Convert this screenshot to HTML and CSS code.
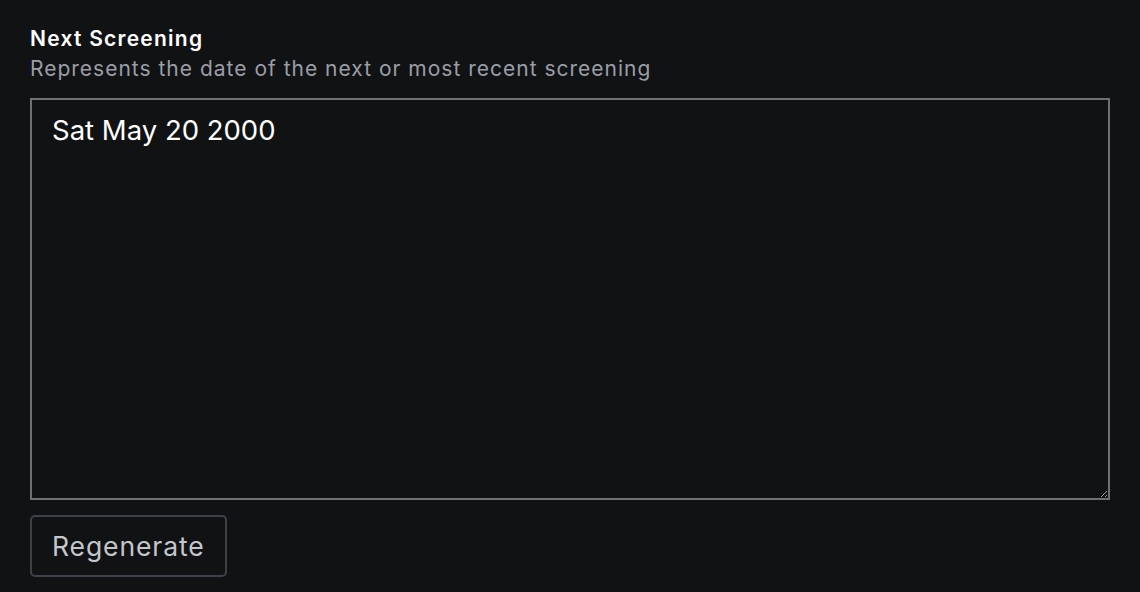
FILE: index.html
```html
<!DOCTYPE html>
<html lang="en">
<head>
<meta charset="utf-8">
<link rel="stylesheet" href="styles.css">
</head>
<body>
<div class="field">
  <label class="label" for="next">Next Screening</label>
  <div class="desc">Represents the date of the next or most recent screening</div>
  <textarea id="next" class="input">Sat May 20 2000</textarea>
  <div class="actions"><button class="btn">Regenerate</button></div>
</div>
</body>
</html>
```
FILE: styles.css
```css
html, body {
  margin: 0;
  background: #111214;
  color-scheme: dark;
}
body {
  font-family: Inter, "Noto Sans", sans-serif;
  padding: 25px 30px 0 30px;
}
.field {
  display: flex;
  flex-direction: column;
}
.label {
  font-size: 21px;
  font-weight: 600;
  letter-spacing: 1.25px;
  color: #ffffff;
  line-height: 28px;
}
.desc {
  font-size: 21px;
  letter-spacing: 1px;
  color: #9a9ea6;
  line-height: 32px;
  margin-bottom: 13px;
}
.input {
  box-sizing: border-box;
  width: 1080px;
  height: 402px;
  margin: 0;
  background: #111214;
  border: 2px solid #6c7077;
  color: #ffffff;
  font-family: Inter, "Noto Sans", sans-serif;
  font-size: 27.5px;
  line-height: 32px;
  padding: 14px 20px;
  resize: both;
  outline: none;
}
.actions {
  margin-top: 15px;
}
.btn {
  box-sizing: border-box;
  height: 62px;
  padding: 0 20px;
  background: #111214;
  border: 2px solid #3e4147;
  border-radius: 5px;
  color: #c4c7cc;
  font-family: Inter, "Noto Sans", sans-serif;
  font-size: 26.5px;
  letter-spacing: 0.9px;
}
```
